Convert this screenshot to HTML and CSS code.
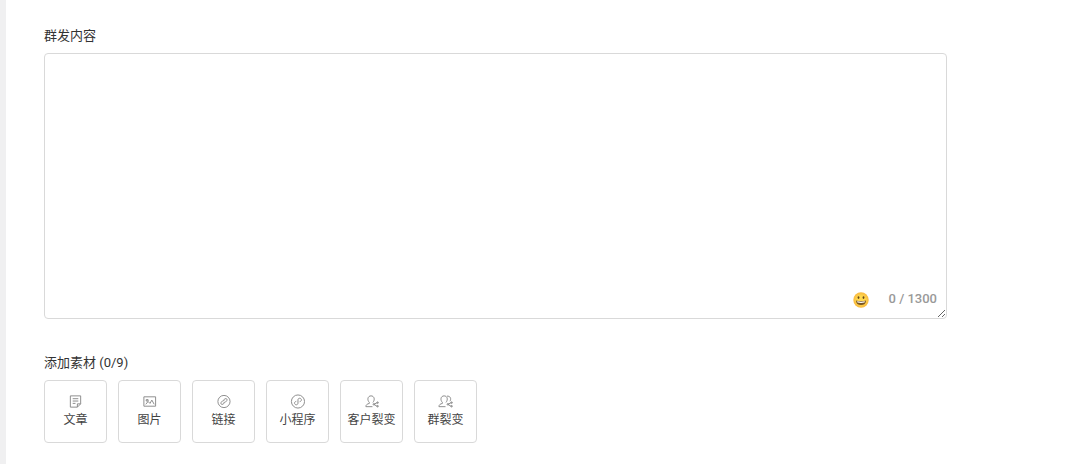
FILE: index.html
```
<!DOCTYPE html>
<html lang="zh-CN">
<head>
<meta charset="utf-8">
<meta name="viewport" content="width=device-width, initial-scale=1">
<title>群发内容</title>
<link rel="stylesheet" href="styles.css">
</head>
<body>
<main class="panel">
  <section class="field">
    <label class="field-label" for="content">群发内容</label>
    <div class="editor">
      <textarea class="editor-input" id="content" maxlength="1300"></textarea>
      <div class="editor-tools">
        <button class="emoji-button" type="button" aria-label="表情">
          <svg class="emoji" viewBox="0 0 16 16" aria-hidden="true">
            <defs><radialGradient id="face"><stop offset="0.5" stop-color="#ffd94f"/><stop offset="1" stop-color="#f8b83e"/></radialGradient></defs>
            <circle cx="8" cy="8" r="7.7" fill="url(#face)"/>
            <ellipse cx="5.5" cy="5.6" rx=".9" ry="1.3" fill="#65451b"/>
            <ellipse cx="10.5" cy="5.6" rx=".9" ry="1.3" fill="#65451b"/>
            <path d="M3 8.4q5 1.200 10 0c0 3-2 4.600-5 4.600s-5-1.600-5-4.600z" fill="#7a5520"/>
            <path d="M4 9.300q4 .8 8 0l-.5 1.300q-3.500.8-7 0z" fill="#fff"/>
          </svg>
        </button>
        <span class="counter">0 / 1300</span>
      </div>
    </div>
  </section>
  <section class="field">
    <h2 class="field-label">添加素材 (0/9)</h2>
    <div class="materials">
      <button class="material" type="button">
        <svg class="icon" viewBox="0 0 16 16" aria-hidden="true"><path d="M2.500 2h11v8.500L10 14H2.500zM13.500 10.500H10V14M5 5h6M5 7.500h6M5 10h3"/></svg>
        <span>文章</span>
      </button>
      <button class="material" type="button">
        <svg class="icon" viewBox="0 0 16 16" aria-hidden="true"><path d="M2 3h12.500v10H2zM4 11l2.500-3 2 2 2-3.500 2.500 4.500M4.500 6h2v1.500h-2z"/></svg>
        <span>图片</span>
      </button>
      <button class="material" type="button">
        <svg class="icon" viewBox="0 0 16 16" aria-hidden="true"><circle cx="8.500" cy="8" r="6.500"/><path d="M8 6.500l1.500-1.300c1.500-1 3 .5 2 1.900L10 8.700c-.7.6-1.500.6-2 .1M9 9.500l-1.500 1.300c-1.500 1-3-.5-2-1.900L7 7.300c.7-.6 1.500-.6 2-.1"/></svg>
        <span>链接</span>
      </button>
      <button class="material" type="button">
        <svg class="icon" viewBox="0 0 16 16" aria-hidden="true"><circle cx="8.500" cy="8" r="7"/><path d="M10.300 8.200c3-.7 2-3.700 0-3.700-1 0-1.800.7-1.800 1.800v3.400c0 1.100-.8 1.800-1.800 1.800-2 0-3-3 0-3.700"/></svg>
        <span>小程序</span>
      </button>
      <button class="material" type="button">
        <svg class="icon" viewBox="0 0 16 16" aria-hidden="true"><path d="M9 13.500H2c0-2 1.300-2.800 3.700-3.500V9C3 6.300 4 2 7.500 2S12 6 9.500 9M14.500 9l-4 2 4 2.500"/><circle cx="10.500" cy="11" r=".8"/><circle cx="14.500" cy="9.200" r=".8"/><circle cx="14.500" cy="13" r=".8"/></svg>
        <span>客户裂变</span>
      </button>
      <button class="material" type="button">
        <svg class="icon" viewBox="0 0 16 16" aria-hidden="true"><path d="M8 13.500H1c0-2 1.300-2.800 3.700-3.500V9C2 6.300 3 2 6.500 2S11 6 8.500 9M9.500 2.300c3.500-.5 5 2.700 3.300 5.400M14.500 9l-4 2 4 2.500"/><circle cx="10.500" cy="11" r=".8"/><circle cx="14.500" cy="9.200" r=".8"/><circle cx="14.500" cy="13" r=".8"/></svg>
        <span>群裂变</span>
      </button>
    </div>
  </section>
</main>
</body>
</html>
```
FILE: styles.css
```
* {
  box-sizing: border-box;
}

body {
  margin: 0;
  background: #fff;
  color: #333;
  font-family: Roboto, "Noto Sans CJK SC", sans-serif;
  font-size: 13px;
}

.panel {
  display: flex;
  flex-direction: column;
  gap: 34px;
  min-height: 100vh;
  padding: 26px 119px 20px 38px;
  border-left: 6px solid #f0f0f1;
}

.field {
  display: flex;
  flex-direction: column;
  gap: 7px;
}

.field-label {
  margin: 0;
  font-size: 13px;
  font-weight: 400;
  line-height: 20px;
}

.editor {
  position: relative;
  display: flex;
}

.editor-input {
  width: 100%;
  height: 266px;
  padding: 8px 10px 32px;
  border: 1px solid #d9d9d9;
  border-radius: 4px;
  background: #fff;
  color: inherit;
  font: inherit;
  line-height: 20px;
  resize: vertical;
  outline: none;
}

.editor-input:focus {
  border-color: #999;
}

.editor-tools {
  position: absolute;
  right: 10px;
  bottom: 10px;
  display: flex;
  align-items: center;
  gap: 20px;
}

.emoji-button {
  display: flex;
  padding: 2px 0 0;
  border: 0;
  background: none;
  cursor: pointer;
}

.emoji {
  width: 16px;
  height: 16px;
}

.counter {
  color: #999;
  font-size: 13px;
  font-weight: 500;
  line-height: 20px;
}

.materials {
  display: flex;
  flex-wrap: wrap;
  gap: 11px;
}

.material {
  display: flex;
  flex-direction: column;
  align-items: center;
  justify-content: center;
  gap: 2px;
  width: 63px;
  height: 63px;
  padding: 0;
  border: 1px solid #d9d9d9;
  border-radius: 4px;
  background: #fff;
  color: #444;
  font-family: inherit;
  font-size: 12px;
  line-height: 18px;
  white-space: nowrap;
  cursor: pointer;
}

.icon {
  width: 15px;
  height: 15px;
  fill: none;
  stroke: #888;
  stroke-width: 1;
}
```
